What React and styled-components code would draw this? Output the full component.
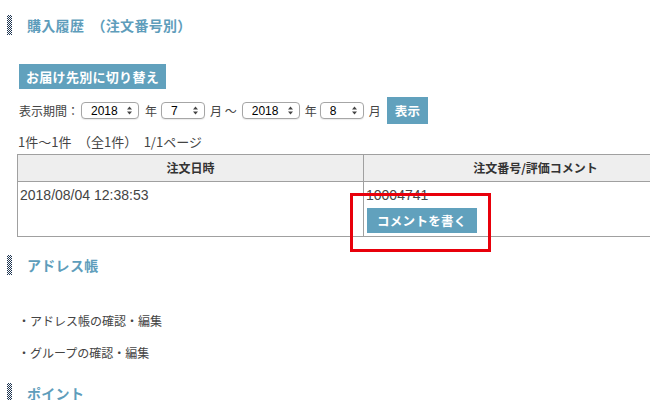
import React from 'react'
import styled, { createGlobalStyle } from 'styled-components'

const GlobalStyle = createGlobalStyle`
    body {
        margin: 0;
        background: #fff;
        font-family: "Liberation Sans", "Noto Sans CJK JP", sans-serif;
        color: #333;
    }
`;

const Page = styled.div`
    position: relative;
    width: 650px;
    height: 400px;
    overflow: hidden;
    padding: 15px 0 0 18px;
    box-sizing: border-box;
`;

const Heading = styled.h2`
    display: flex;
    align-items: center;
    gap: 15px;
    height: 20px;
    margin: ${props => props.top || 0}px 0 0 -11px;
    font-size: 14px;
    font-weight: bold;
    color: #5e9dbb;
    letter-spacing: 0.3px;

    &::before {
        content: '';
        width: 5px;
        height: 20px;
        background: repeating-conic-gradient(#1d3450 0 25%, #fff 0 50%) 0 0 / 2px 2px;
    }
`;

const BlueButton = styled.button`
    display: block;
    border: none;
    background: #61a1bd;
    color: #fff;
    font-family: "Noto Sans CJK JP", sans-serif;
    font-weight: bold;
    font-size: ${props => props.small ? 12.5 : 13}px;
    height: ${props => props.h || 25}px;
    padding: 0 ${props => props.px || 7}px;
    margin: ${props => props.m || 0};
    cursor: pointer;
    letter-spacing: 0.3px;
`;

const FormRow = styled.div`
    display: flex;
    align-items: center;
    margin-top: 8px;
    height: 27px;
    font-size: 12px;
    font-family: "Noto Sans CJK JP", sans-serif;
    color: #444;
`;

const Label = styled.span`
    white-space: pre;
    margin: 0 ${props => props.mr || 4}px 0 ${props => props.ml || 0}px;
`;

const SelectBox = styled.span`
    position: relative;
    display: inline-flex;
    width: ${props => props.w}px;
    height: 17px;
`;

const Select = styled.select`
    appearance: none;
    -webkit-appearance: none;
    width: 100%;
    height: 100%;
    border: 1px solid #a6a6a6;
    border-radius: 4px;
    background: #fff;
    font-family: "Liberation Sans", sans-serif;
    font-size: 12px;
    color: #000;
    padding: 0 0 0 9px;
    box-shadow: 0 1px 1px rgba(0, 0, 0, 0.08);
`;

const Arrows = styled.svg`
    position: absolute;
    right: 7px;
    top: 4px;
    pointer-events: none;
`;

const Count = styled.div`
    margin-top: 10px;
    font-size: 13px;
    line-height: 16px;
    color: #444;
    font-family: "Noto Sans CJK JP", sans-serif;
`;

const Table = styled.table`
    border-collapse: collapse;
    width: 691px;
    margin: 4px 0 0 -1px;
    font-size: 14px;
`;

const Th = styled.th`
    background: #eeeeee;
    border: 1px solid #a0a0a0;
    padding: 5px 0;
    line-height: 16px;
    font-size: 12px;
    font-family: "Noto Sans CJK JP", sans-serif;
    width: ${props => props.w}px;
`;

const Td = styled.td`
    border: 1px solid #a0a0a0;
    vertical-align: top;
    padding: 5px 2px 3px 2px;
    line-height: 16px;
    color: #444;
`;

const List = styled.ul`
    list-style: none;
    margin: 38px 0 0 0;
    padding: 0;
    font-size: 12px;
    font-family: "Noto Sans CJK JP", sans-serif;
    color: #444;
`;

const Item = styled.li`
    line-height: 16px;
    & + & {
        margin-top: 16px;
    }
`;

const Highlight = styled.div`
    position: absolute;
    left: 350px;
    top: 193px;
    width: 141px;
    height: 59px;
    border: 3px solid #e8000b;
    box-sizing: border-box;
    pointer-events: none;
`;

const Dropdown = ({ w, value, options }) => (
    <SelectBox w={w}>
        <Select defaultValue={value}>
            {options.map(o => <option key={o}>{o}</option>)}
        </Select>
        <Arrows width="5" height="9" viewBox="0 0 5 9">
            <path d="M0 3.5 L2.5 0.5 L5 3.5 Z M0 5.5 L2.5 8.5 L5 5.5 Z" fill="#444" />
        </Arrows>
    </SelectBox>
);

const years = ['2017', '2018'];
const months = ['1','2','3','4','5','6','7','8','9','10','11','12'];

const App = () => {
    return (
        <Page>
            <GlobalStyle />
            <Heading>購入履歴　（注文番号別）</Heading>

            <BlueButton m="29px 0 0 1px">お届け先別に切り替え</BlueButton>

            <FormRow>
                <Label ml={1} mr={2}>表示期間：</Label>
                <Dropdown w={58} value="2018" options={years} />
                <Label ml={6} mr={4}>年</Label>
                <Dropdown w={44} value="7" options={months} />
                <Label ml={5} mr={5}>月 〜</Label>
                <Dropdown w={58} value="2018" options={years} />
                <Label ml={5} mr={3}>年</Label>
                <Dropdown w={44} value="8" options={months} />
                <Label ml={5} mr={6}>月</Label>
                <BlueButton h={27} px={8} small>表示</BlueButton>
            </FormRow>

            <Count>1件〜1件　（全1件）　1/1ページ</Count>

            <Table>
                <thead>
                    <tr>
                        <Th w={345}>注文日時</Th>
                        <Th>注文番号/評価コメント</Th>
                    </tr>
                </thead>
                <tbody>
                    <tr>
                        <Td>2018/08/04 12:38:53</Td>
                        <Td>
                            10004741
                            <BlueButton small h={25} px={10} m="5px 0 0 1px">コメントを書く</BlueButton>
                        </Td>
                    </tr>
                </tbody>
            </Table>

            <Heading top={18}>アドレス帳</Heading>

            <List>
                <Item>・アドレス帳の確認・編集</Item>
                <Item>・グループの確認・編集</Item>
            </List>

            <Heading top={22}>ポイント</Heading>

            <Highlight />
        </Page>
    )
}

export default App
